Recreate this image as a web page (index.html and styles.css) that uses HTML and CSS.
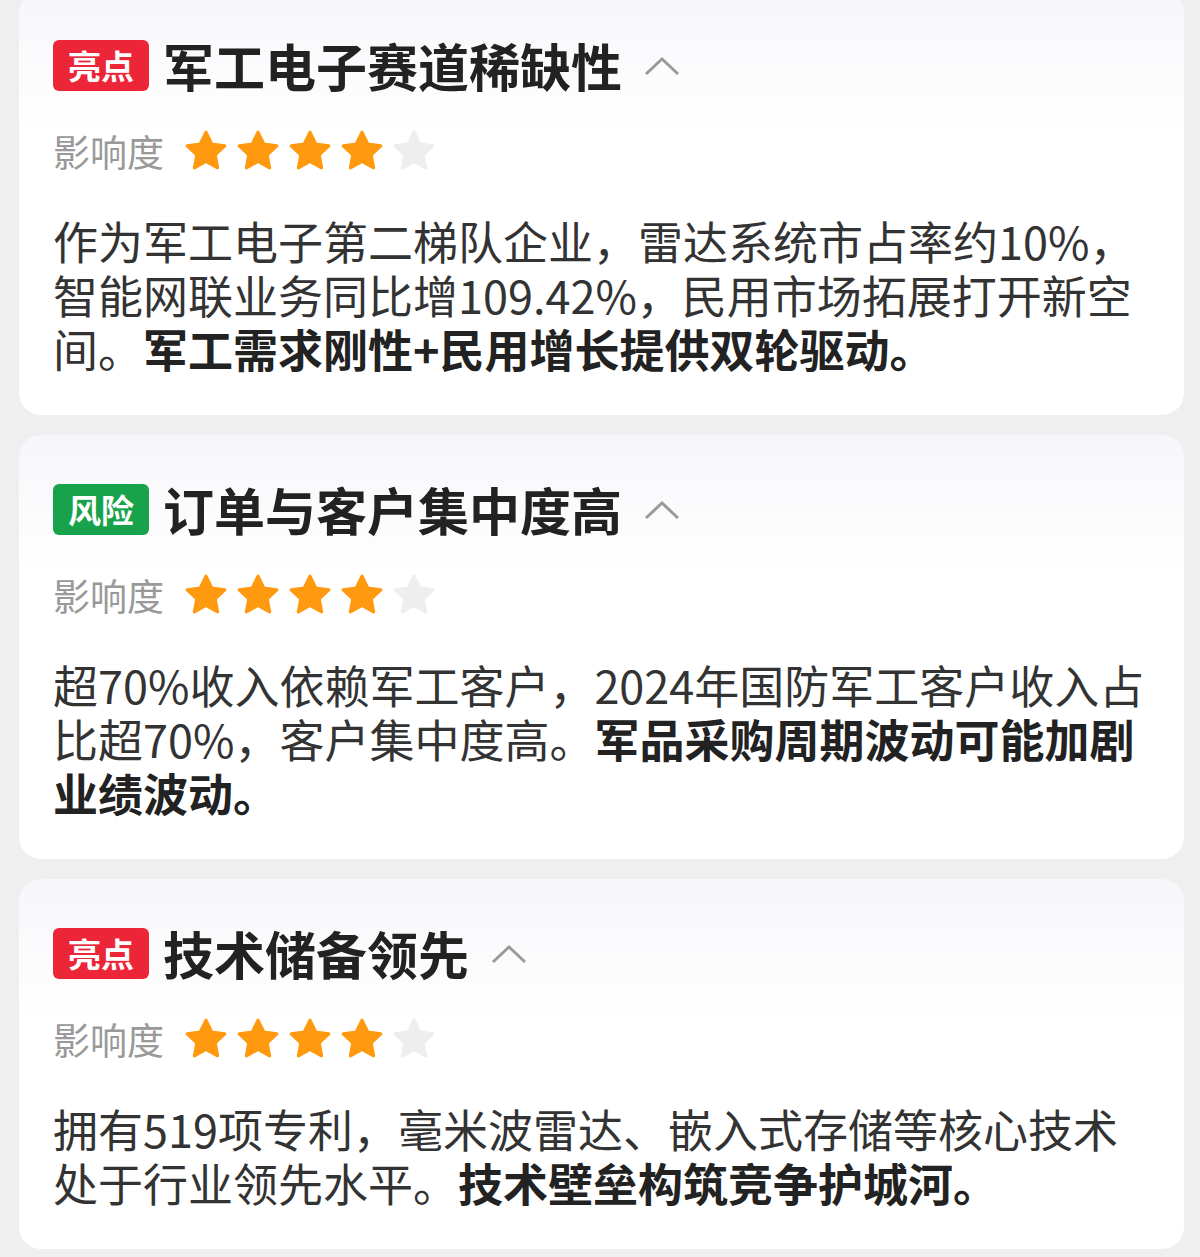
FILE: index.html
```html
<!DOCTYPE html>
<html lang="zh-CN">
<head>
<meta charset="utf-8">
<title>要点</title>
<link rel="stylesheet" href="styles.css">
</head>
<body>
<div class="list">
  <section class="card">
    <div class="head">
      <span class="tag tag-red">亮点</span>
      <h2 class="title">军工电子赛道稀缺性</h2>
      <svg class="chev" viewBox="0 0 36 20" width="36" height="20"><path d="M2 18 L18 3 L34 18" fill="none" stroke="#9a9a9a" stroke-width="3"/></svg>
    </div>
    <div class="rate">
      <span class="rate-label">影响度</span>
      <span class="stars">
        <svg class="star on" viewBox="0 0 24 24"><path d="M12 2.6l2.9 6 6.5.8-4.8 4.5 1.2 6.5L12 17.2l-5.8 3.2 1.2-6.5-4.8-4.5 6.5-.8z"/></svg>
        <svg class="star on" viewBox="0 0 24 24"><path d="M12 2.6l2.9 6 6.5.8-4.8 4.5 1.2 6.5L12 17.2l-5.8 3.2 1.2-6.5-4.8-4.5 6.5-.8z"/></svg>
        <svg class="star on" viewBox="0 0 24 24"><path d="M12 2.6l2.9 6 6.5.8-4.8 4.5 1.2 6.5L12 17.2l-5.8 3.2 1.2-6.5-4.8-4.5 6.5-.8z"/></svg>
        <svg class="star on" viewBox="0 0 24 24"><path d="M12 2.6l2.9 6 6.5.8-4.8 4.5 1.2 6.5L12 17.2l-5.8 3.2 1.2-6.5-4.8-4.5 6.5-.8z"/></svg>
        <svg class="star off" viewBox="0 0 24 24"><path d="M12 2.6l2.9 6 6.5.8-4.8 4.5 1.2 6.5L12 17.2l-5.8 3.2 1.2-6.5-4.8-4.5 6.5-.8z"/></svg>
      </span>
    </div>
    <p class="body">作为军工电子第二梯队企业，雷达系统市占率约10%，智能网联业务同比增109.42%，民用市场拓展打开新空间。<b>军工需求刚性+民用增长提供双轮驱动。</b></p>
  </section>

  <section class="card">
    <div class="head">
      <span class="tag tag-green">风险</span>
      <h2 class="title">订单与客户集中度高</h2>
      <svg class="chev" viewBox="0 0 36 20" width="36" height="20"><path d="M2 18 L18 3 L34 18" fill="none" stroke="#9a9a9a" stroke-width="3"/></svg>
    </div>
    <div class="rate">
      <span class="rate-label">影响度</span>
      <span class="stars">
        <svg class="star on" viewBox="0 0 24 24"><path d="M12 2.6l2.9 6 6.5.8-4.8 4.5 1.2 6.5L12 17.2l-5.8 3.2 1.2-6.5-4.8-4.5 6.5-.8z"/></svg>
        <svg class="star on" viewBox="0 0 24 24"><path d="M12 2.6l2.9 6 6.5.8-4.8 4.5 1.2 6.5L12 17.2l-5.8 3.2 1.2-6.5-4.8-4.5 6.5-.8z"/></svg>
        <svg class="star on" viewBox="0 0 24 24"><path d="M12 2.6l2.9 6 6.5.8-4.8 4.5 1.2 6.5L12 17.2l-5.8 3.2 1.2-6.5-4.8-4.5 6.5-.8z"/></svg>
        <svg class="star on" viewBox="0 0 24 24"><path d="M12 2.6l2.9 6 6.5.8-4.8 4.5 1.2 6.5L12 17.2l-5.8 3.2 1.2-6.5-4.8-4.5 6.5-.8z"/></svg>
        <svg class="star off" viewBox="0 0 24 24"><path d="M12 2.6l2.9 6 6.5.8-4.8 4.5 1.2 6.5L12 17.2l-5.8 3.2 1.2-6.5-4.8-4.5 6.5-.8z"/></svg>
      </span>
    </div>
    <p class="body">超70%收入依赖军工客户，2024年国防军工客户收入占比超70%，客户集中度高。<b>军品采购周期波动可能加剧业绩波动。</b></p>
  </section>

  <section class="card">
    <div class="head">
      <span class="tag tag-red">亮点</span>
      <h2 class="title">技术储备领先</h2>
      <svg class="chev" viewBox="0 0 36 20" width="36" height="20"><path d="M2 18 L18 3 L34 18" fill="none" stroke="#9a9a9a" stroke-width="3"/></svg>
    </div>
    <div class="rate">
      <span class="rate-label">影响度</span>
      <span class="stars">
        <svg class="star on" viewBox="0 0 24 24"><path d="M12 2.6l2.9 6 6.5.8-4.8 4.5 1.2 6.5L12 17.2l-5.8 3.2 1.2-6.5-4.8-4.5 6.5-.8z"/></svg>
        <svg class="star on" viewBox="0 0 24 24"><path d="M12 2.6l2.9 6 6.5.8-4.8 4.5 1.2 6.5L12 17.2l-5.8 3.2 1.2-6.5-4.8-4.5 6.5-.8z"/></svg>
        <svg class="star on" viewBox="0 0 24 24"><path d="M12 2.6l2.9 6 6.5.8-4.8 4.5 1.2 6.5L12 17.2l-5.8 3.2 1.2-6.5-4.8-4.5 6.5-.8z"/></svg>
        <svg class="star on" viewBox="0 0 24 24"><path d="M12 2.6l2.9 6 6.5.8-4.8 4.5 1.2 6.5L12 17.2l-5.8 3.2 1.2-6.5-4.8-4.5 6.5-.8z"/></svg>
        <svg class="star off" viewBox="0 0 24 24"><path d="M12 2.6l2.9 6 6.5.8-4.8 4.5 1.2 6.5L12 17.2l-5.8 3.2 1.2-6.5-4.8-4.5 6.5-.8z"/></svg>
      </span>
    </div>
    <p class="body">拥有519项专利，毫米波雷达、嵌入式存储等核心技术处于行业领先水平。<b>技术壁垒构筑竞争护城河。</b></p>
  </section>
</div>
</body>
</html>
```

FILE: styles.css
```css
html, body {
  margin: 0;
  padding: 0;
  background: #efefef;
}
body {
  font-family: "Noto Sans CJK SC", "Noto Sans", sans-serif;
  color: #333;
  overflow: hidden;
}
.list {
  display: flex;
  flex-direction: column;
  gap: 20px;
  padding: 0 16px 0 19px;
  margin-top: -9px;
}
.card {
  background: linear-gradient(180deg, #f6f6fb 0px, #fbfbfd 70px, #ffffff 140px);
  border-radius: 22px;
  padding: 49px 34px 39px 34px;
}
.head {
  display: flex;
  align-items: center;
  height: 51px;
}
.tag {
  display: inline-flex;
  align-items: center;
  justify-content: center;
  width: 96px;
  height: 51px;
  border-radius: 6px;
  color: #fff;
  font-size: 33px;
  font-weight: 700;
  line-height: 1;
  flex-shrink: 0;
}
.tag-red { background: #ec2638; }
.tag-green { background: #17a24b; }
.title {
  margin: 0 0 0 14px;
  font-size: 51px;
  font-weight: 700;
  color: #222;
  line-height: 1;
}
.chev {
  margin-left: 22px;
  width: 36px;
  height: 20px;
}
.rate {
  display: flex;
  align-items: center;
  height: 50px;
  margin-top: 35px;
}
.rate-label {
  font-size: 37px;
  color: #999;
  line-height: 1;
}
.stars {
  display: flex;
  gap: 4px;
  margin-left: 18px;
}
.star {
  width: 48px;
  height: 48px;
}
.star path {
  stroke-width: 1.6;
  stroke-linejoin: round;
}
.star.on path { fill: #ff9a10; stroke: #ff9a10; }
.star.off path { fill: #eeeeee; stroke: #eeeeee; }
.body {
  margin: 38px 0 0 0;
  font-size: 45px;
  line-height: 54px;
  color: #333;
}
.body b {
  font-weight: 700;
  color: #222;
}
```
